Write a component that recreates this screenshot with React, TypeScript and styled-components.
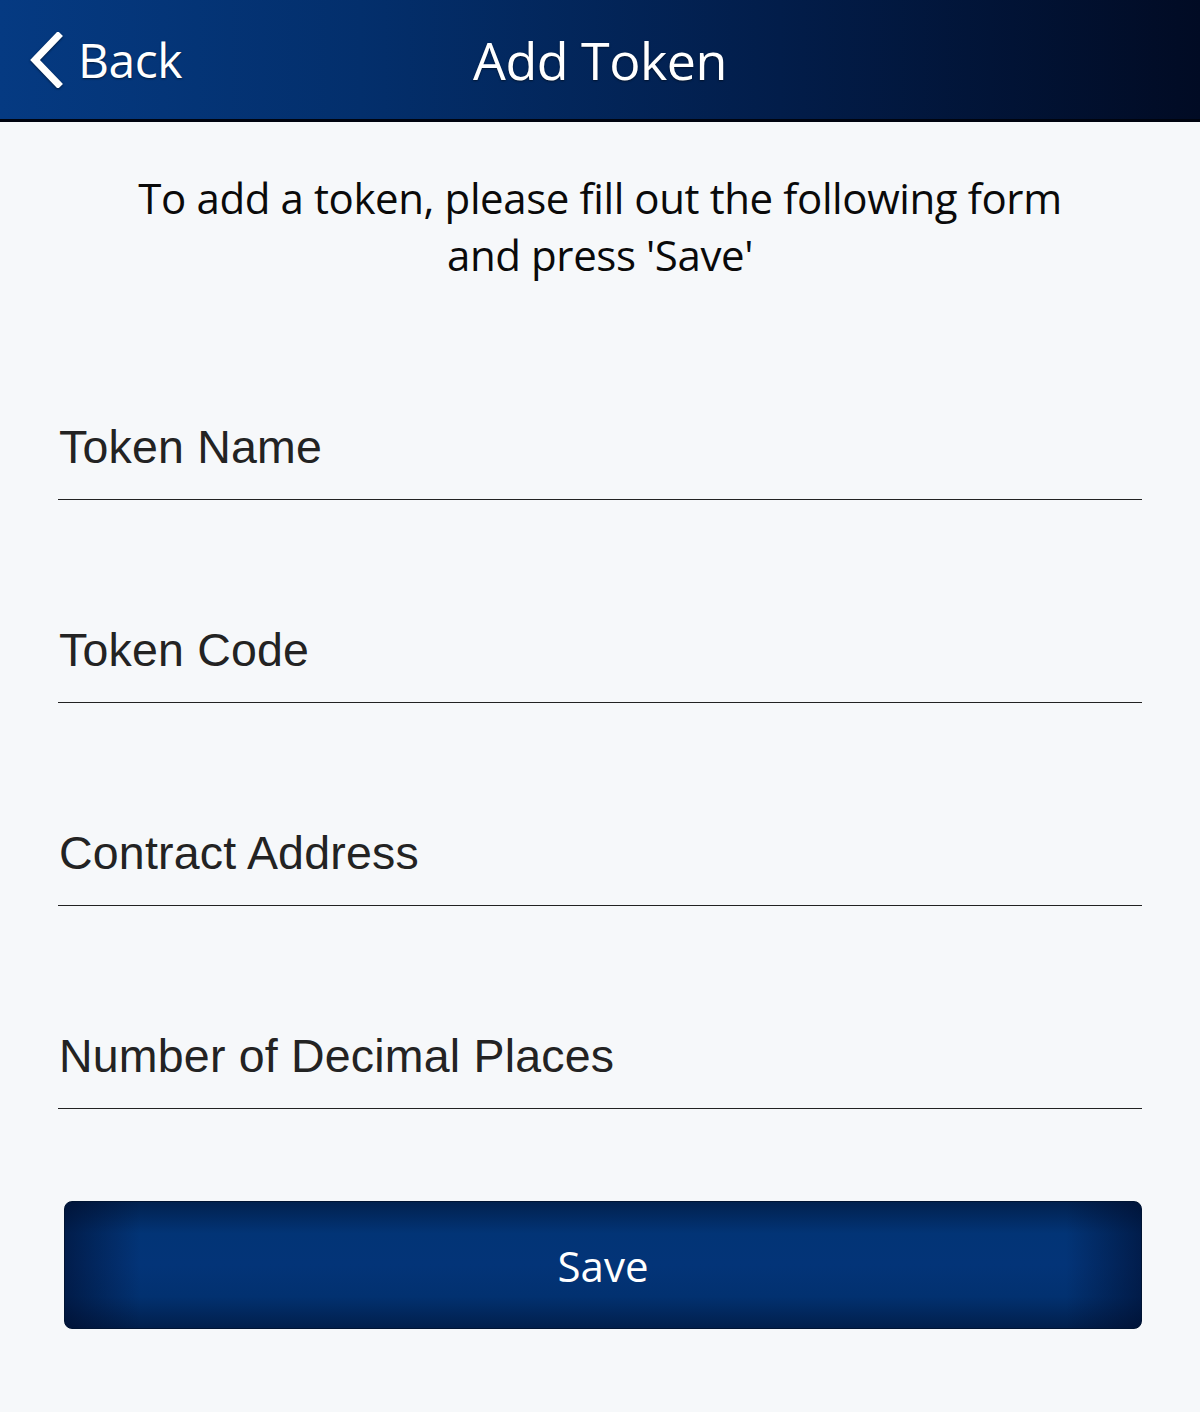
import React from "react";
import styled, { createGlobalStyle } from "styled-components";

const Global = createGlobalStyle`
  html, body { margin: 0; padding: 0; background: #f6f8fa; }
  #root { min-height: 1412px; background: #f6f8fa; }
`;

const Page = styled.div`
  width: 1200px;
  min-height: 1412px;
  display: flex;
  flex-direction: column;
  background: #f6f8fa;
`;

const Header = styled.header`
  height: 119px;
  border-bottom: 3px solid #00040f;
  background: linear-gradient(90deg, #053a82 0%, #032f6c 30%, #021d4a 65%, #010b24 100%);
  display: grid;
  grid-template-columns: 1fr auto 1fr;
  align-items: center;
  color: #fff;
  font-family: "Open Sans", "Noto Sans", sans-serif;
  text-shadow: 0 1px 2px rgba(0, 0, 0, 0.5);
`;

const BackButton = styled.div`
  display: flex;
  align-items: center;
  gap: 14px;
  padding-left: 28px;
  font-size: 48px;
  letter-spacing: -0.5px;
  svg { filter: drop-shadow(0 1px 1px rgba(0,0,0,0.5)); }
`;

const Title = styled.h1`
  margin: 0;
  font-weight: 400;
  font-size: 52px;
  letter-spacing: -0.5px;
`;

const Intro = styled.p`
  margin: 47px 0 0;
  text-align: center;
  font-family: "Open Sans", "Noto Sans", sans-serif;
  font-size: 42px;
  line-height: 57px;
  color: #0a0a0a;
  letter-spacing: -0.4px;
`;

const Form = styled.div`
  display: flex;
  flex-direction: column;
  padding: 0 58px;
  margin-top: 77px;
`;

const Field = styled.div`
  height: 203px;
  display: flex;
  align-items: flex-end;
  border-bottom: 1.5px solid #222;
  box-sizing: border-box;
  &:first-child { height: 140px; }
`;

const Label = styled.div`
  padding-left: 1px;
  padding-bottom: 25px;
  font-family: "Liberation Sans", Arial, sans-serif;
  font-size: 46.5px;
  letter-spacing: 0.2px;
  color: #232323;
`;

const SaveButton = styled.button`
  margin: 92px 58px 0 64px;
  height: 128px;
  border: 1px solid #001433;
  border-radius: 8px;
  background:
    linear-gradient(90deg, rgba(0,10,40,0.55) 0%, rgba(0,10,40,0) 7%, rgba(0,10,40,0) 93%, rgba(0,10,40,0.55) 100%),
    linear-gradient(180deg, #01214f 0%, #023476 25%, #033478 50%, #023170 75%, #011f4c 100%);
  color: #fff;
  font-family: "Open Sans", "Noto Sans", sans-serif;
  font-size: 42px;
  display: flex;
  align-items: center;
  justify-content: center;
  padding: 0;
`;

const fields = ["Token Name", "Token Code", "Contract Address", "Number of Decimal Places"];

export default function App() {
  return (
    <Page>
      <Global />
      <Header>
        <BackButton>
          <svg width="36" height="56" viewBox="0 0 36 56">
            <polyline points="30,4 7,28 30,52" fill="none" stroke="#fff" strokeWidth="7" strokeLinecap="square" />
          </svg>
          <span>Back</span>
        </BackButton>
        <Title>Add Token</Title>
        <div />
      </Header>
      <Intro>
        To add a token, please fill out the following form
        <br />
        and press 'Save'
      </Intro>
      <Form>
        {fields.map((f) => (
          <Field key={f}>
            <Label>{f}</Label>
          </Field>
        ))}
      </Form>
      <SaveButton>Save</SaveButton>
    </Page>
  );
}
